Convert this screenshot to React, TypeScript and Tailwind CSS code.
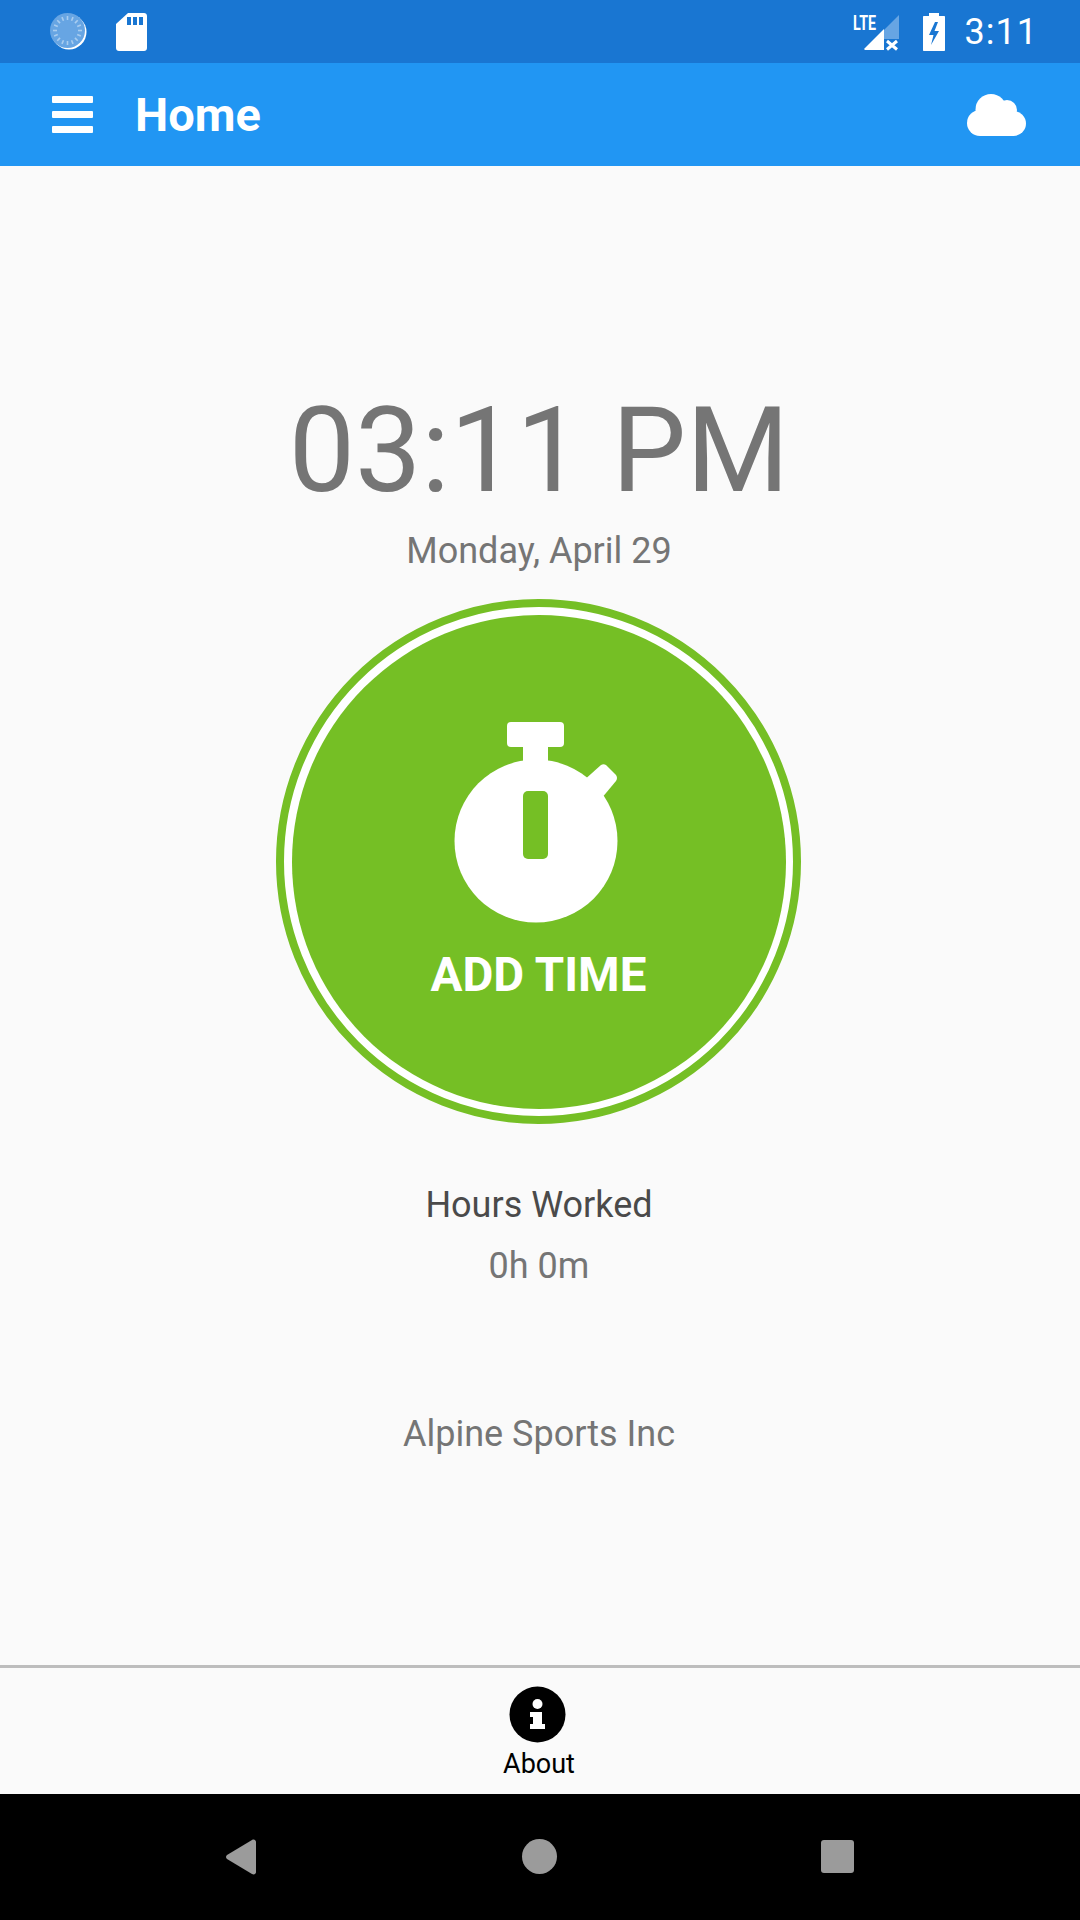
import React from 'react';

const StatusBar: React.FC = () => (
  <div className="flex h-[63px] items-center bg-[#1976d2] pl-[50px] pr-[42px] text-white">
    {/* Sync spinner */}
    <svg width="37" height="37" viewBox="0 0 37 37" className="shrink-0">
      <circle cx="19" cy="19" r="17.5" fill="#fff" />
      <circle cx="17.5" cy="17.5" r="17.5" fill="#67a5e3" />
      {Array.from({ length: 16 }).map((_, i) => (
        <line
          key={i}
          x1="17.5"
          y1="3"
          x2="17.5"
          y2="7"
          stroke="#a9cdf0"
          strokeWidth="1.6"
          transform={`rotate(${i * 22.5} 17.5 17.5)`}
        />
      ))}
    </svg>
    {/* SD card */}
    <svg width="31" height="38" viewBox="0 0 31 38" className="ml-[29px] shrink-0">
      <path
        d="M12 0H28C29.7 0 31 1.3 31 3V35C31 36.7 29.7 38 28 38H3C1.3 38 0 36.7 0 35V11Z"
        fill="#fff"
      />
      <rect x="11" y="4" width="4" height="8" fill="#1976d2" />
      <rect x="17" y="4" width="4" height="8" fill="#1976d2" />
      <rect x="23" y="4" width="4" height="8" fill="#1976d2" />
    </svg>

    <div className="ml-auto flex items-center">
      {/* LTE signal with no service */}
      <div className="relative h-[38px] w-[46px] shrink-0">
        <svg width="35" height="36" viewBox="0 0 35 36" className="absolute left-[11px] top-[2px]">
          <path d="M35 0V24H20V15Z" fill="#67a5e3" />
          <path d="M0 34L20 14V35H1Z" fill="#fff" />
          <path d="M23 26L33 34.500M33 26L23 34.500" stroke="#fff" strokeWidth="3" />
        </svg>
        <span className="absolute left-0 top-0 origin-top-left scale-x-[0.68] font-['Roboto',sans-serif] text-[21px] font-bold leading-[20px]">
          LTE
        </span>
      </div>
      {/* Charging battery */}
      <svg width="22" height="38" viewBox="0 0 22 38" className="ml-[24px] shrink-0">
        <path
          d="M6 0H16V3H21C21.6 3 22 3.4 22 4V37C22 37.6 21.6 38 21 38H1C0.4 38 0 37.6 0 37V4C0 3.4 0.4 3 1 3H6Z"
          fill="#fff"
        />
        <path d="M12 9L6 22H10.5L8 32L16 18H11.5L15 9Z" fill="#1976d2" />
      </svg>
      <span className="ml-[20px] font-['Roboto',sans-serif] text-[36px] leading-[40px] tracking-[1px]">3:11</span>
    </div>
  </div>
);

const AppBar: React.FC = () => (
  <header className="flex h-[103px] items-center bg-[#2196f3] pl-[52px] pr-[54px] text-white">
    <div className="flex w-[41px] flex-col gap-[8px]">
      <div className="h-[7px] rounded-[1px] bg-white" />
      <div className="h-[7px] rounded-[1px] bg-white" />
      <div className="h-[7px] rounded-[1px] bg-white" />
    </div>
    <h1 className="ml-[42px] font-['Roboto',sans-serif] text-[47px] font-bold leading-[54px]">Home</h1>
    <svg width="59" height="42" viewBox="0 0 59 42" className="ml-auto shrink-0">
      <circle cx="24" cy="15.500" r="15.500" fill="#fff" />
      <circle cx="40" cy="16" r="10" fill="#fff" />
      <circle cx="13" cy="29" r="13" fill="#fff" />
      <circle cx="46.500" cy="29.500" r="12.500" fill="#fff" />
      <rect x="13" y="18" width="34" height="24" fill="#fff" />
    </svg>
  </header>
);

const Stopwatch: React.FC = () => (
  <svg width="164" height="201" viewBox="0 0 164 201" className="shrink-0">
    <rect x="53" y="0" width="57" height="25" rx="4" fill="#fff" />
    <rect x="69" y="20" width="25" height="25" fill="#fff" />
    <path d="M133 55.500L147 43Q149.500 41.500 152 43L162 53Q164 56 162 59L149.500 74L133 56Z" fill="#fff" />
    <circle cx="82" cy="119" r="81.500" fill="#fff" />
    <rect x="69" y="69" width="25" height="68" rx="5" fill="#75bf25" />
  </svg>
);

const NavButtons: React.FC = () => (
  <div className="flex h-[126px] items-start justify-center bg-black pt-[45px]">
    <svg width="30" height="36" viewBox="0 0 30 36" className="shrink-0">
      <path
        d="M1 16L26 1C28 0 30 1 30 3V33C30 35 28 36 26 35L1 20C-0.300 19 -0.300 17 1 16Z"
        fill="#9b9b9b"
      />
    </svg>
    <div className="ml-[266px] h-[35px] w-[35px] shrink-0 rounded-full bg-[#9b9b9b]" />
    <div className="ml-[264px] mt-[1px] h-[33px] w-[33px] shrink-0 rounded-[3px] bg-[#9b9b9b]" />
  </div>
);

const App: React.FC = () => {
  return (
    <div className="flex h-[1920px] w-[1080px] flex-col overflow-hidden bg-[#fafafa] font-['Roboto',sans-serif]">
      <StatusBar />
      <AppBar />

      <main className="flex flex-1 flex-col items-center pr-[2px] pt-[217px]">
        <div className="text-[118px] leading-[136px] text-[#757575]">03:11 PM</div>
        <div className="mt-[11px] text-[36px] leading-[42px] text-[#757575]">Monday, April 29</div>

        <button className="mr-[1px] mt-[27px] flex h-[525px] w-[525px] shrink-0 items-center justify-center rounded-full border-[8px] border-[#75bf25] bg-white p-0">
          <div className="flex h-[494px] w-[494px] flex-col items-center rounded-full bg-[#75bf25] pt-[107px]">
            <div className="-ml-[6px]">
              <Stopwatch />
            </div>
            <span className="mt-[24px] text-[47.5px] font-bold leading-[56px] text-white">ADD TIME</span>
          </div>
        </button>

        <div className="mt-[59px] text-[36px] leading-[44px] text-[#4a4a4a]">Hours Worked</div>
        <div className="mt-[17px] text-[36px] leading-[44px] text-[#757575]">0h 0m</div>
        <div className="mt-[124px] text-[36px] leading-[44px] text-[#757575]">Alpine Sports Inc</div>
      </main>

      <footer className="flex h-[129px] flex-col items-center border-t-[3px] border-[#bdbdbd] pt-[18px]">
        <svg width="57" height="57" viewBox="0 0 57 57" className="mr-[6px] shrink-0">
          <circle cx="28.500" cy="28.500" r="28" fill="#000" />
          <circle cx="28.500" cy="18" r="5" fill="#fff" />
          <path d="M21 26H33V38H36V43H21V38H24V31H21Z" fill="#fff" />
        </svg>
        <span className="mr-[2px] mt-[6px] text-[27px] leading-[31px] text-black">About</span>
      </footer>

      <NavButtons />
    </div>
  );
};

export default App;
